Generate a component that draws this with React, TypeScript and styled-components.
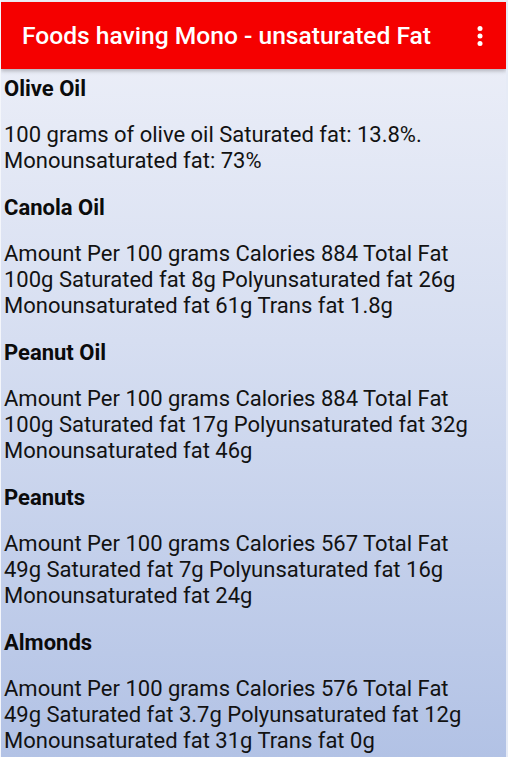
import React from "react";
import styled, { createGlobalStyle } from "styled-components";

const GlobalStyle = createGlobalStyle`
  html, body {
    margin: 0;
    padding: 0;
    height: 100%;
  }
  body {
    font-family: Roboto, "Liberation Sans", Arial, sans-serif;
    background: #ffffff;
  }
`;

const Screen = styled.div`
  width: 508px;
  height: 757px;
  overflow: hidden;
  display: flex;
  flex-direction: column;
  background: linear-gradient(180deg, #eff1f9 0%, #d6def1 45%, #b2c2e5 100%);
  border-left: 1px solid #f4f6fb;
  border-right: 2px solid #e6ebf6;
  box-sizing: border-box;
`;

const Toolbar = styled.header`
  margin-top: 2px;
  height: 67px;
  flex-shrink: 0;
  background: #f50000;
  display: flex;
  align-items: center;
  justify-content: space-between;
  padding: 0 14px 0 21px;
  box-shadow: 0 2px 4px rgba(0, 0, 0, 0.25);
  position: relative;
  z-index: 1;
`;

const Title = styled.h1`
  margin: 0;
  color: #ffffff;
  font-size: 24.6px;
  font-weight: 500;
  white-space: nowrap;
`;

const MenuButton = styled.button`
  background: none;
  border: none;
  padding: 0;
  width: 24px;
  height: 40px;
  display: flex;
  align-items: center;
  justify-content: center;
  cursor: pointer;
`;

const Content = styled.main`
  padding: 7px 4px 0 3px;
  width: 484px;
`;

const Section = styled.section`
  margin-bottom: 21px;
`;

const FoodName = styled.h2`
  margin: 0 0 20px 0;
  font-size: 22px;
  line-height: 26px;
  font-weight: 700;
  color: #0b0b0b;
`;

const Facts = styled.p`
  margin: 0;
  font-size: 22px;
  line-height: 26px;
  color: #121212;
`;

const foods = [
  {
    name: "Olive Oil",
    facts: "100 grams of olive oil Saturated fat: 13.8%. Monounsaturated fat: 73%",
  },
  {
    name: "Canola Oil",
    facts:
      "Amount Per 100 grams Calories 884 Total Fat 100g Saturated fat 8g Polyunsaturated fat 26g Monounsaturated fat 61g Trans fat 1.8g",
  },
  {
    name: "Peanut Oil",
    facts:
      "Amount Per 100 grams Calories 884 Total Fat 100g Saturated fat 17g Polyunsaturated fat 32g Monounsaturated fat 46g",
  },
  {
    name: "Peanuts",
    facts:
      "Amount Per 100 grams Calories 567 Total Fat 49g Saturated fat 7g Polyunsaturated fat 16g Monounsaturated fat 24g",
  },
  {
    name: "Almonds",
    facts:
      "Amount Per 100 grams Calories 576 Total Fat 49g Saturated fat 3.7g Polyunsaturated fat 12g Monounsaturated fat 31g Trans fat 0g",
  },
];

const App: React.FC = () => {
  return (
    <>
      <GlobalStyle />
      <Screen>
        <Toolbar>
          <Title>Foods having Mono - unsaturated Fat</Title>
          <MenuButton aria-label="More options">
            <svg width="8" height="24" viewBox="0 0 8 24">
              <circle cx="4" cy="4.5" r="2.5" fill="#fff" />
              <circle cx="4" cy="12" r="2.5" fill="#fff" />
              <circle cx="4" cy="19.5" r="2.5" fill="#fff" />
            </svg>
          </MenuButton>
        </Toolbar>
        <Content>
          {foods.map((food) => (
            <Section key={food.name}>
              <FoodName>{food.name}</FoodName>
              <Facts>{food.facts}</Facts>
            </Section>
          ))}
        </Content>
      </Screen>
    </>
  );
};

export default App;
